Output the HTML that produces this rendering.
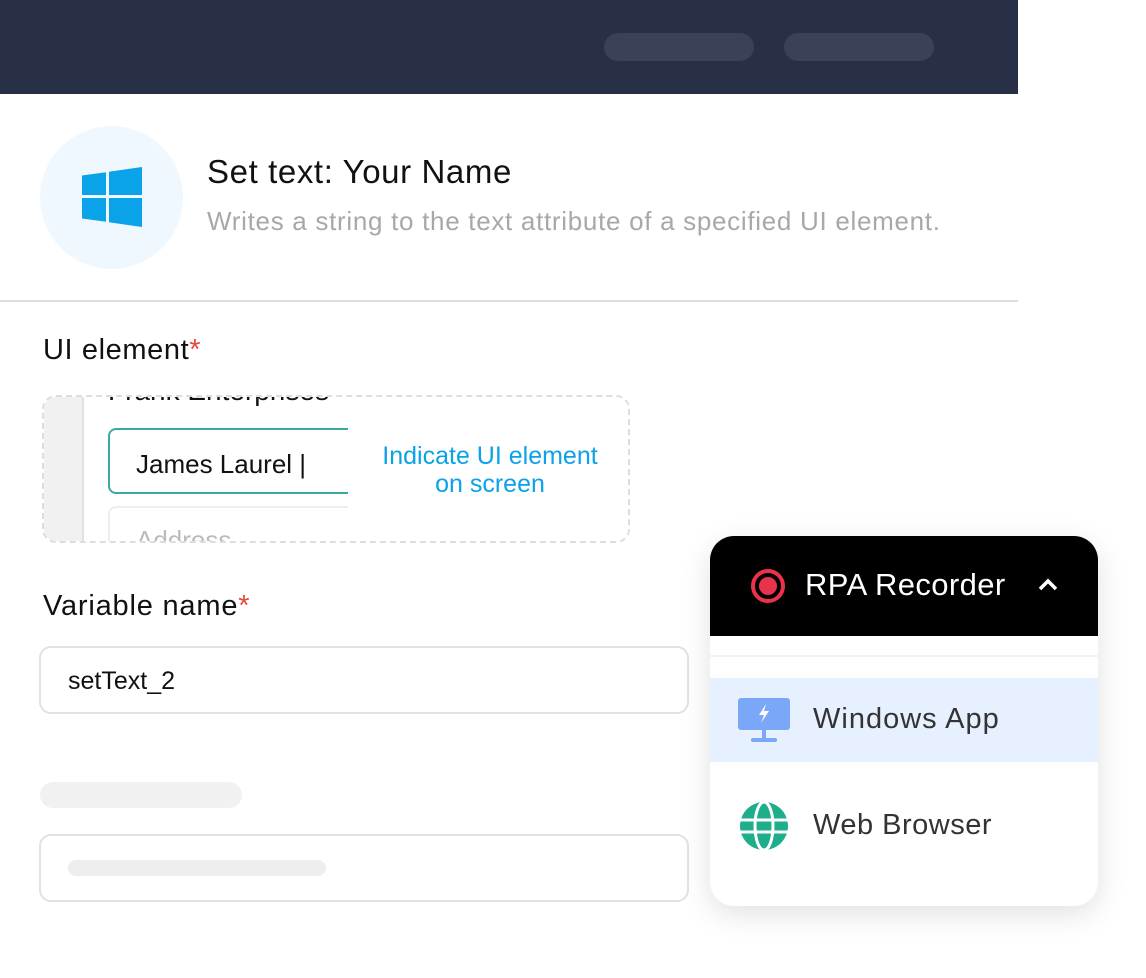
<!DOCTYPE html>
<html><head><style>
body{margin:0;width:1146px;height:978px;background:#fff;position:relative;overflow:hidden;font-family:"Liberation Sans",sans-serif}
.a{position:absolute}
</style></head><body>
<div class="a" style="left:0;top:0;width:1018px;height:94px;background:#283048"></div>
<div class="a" style="left:604px;top:33px;width:150px;height:28px;border-radius:14px;background:#3a4259"></div>
<div class="a" style="left:784px;top:33px;width:150px;height:28px;border-radius:14px;background:#3a4259"></div>
<div class="a" style="left:40px;top:126px;width:143px;height:143px;border-radius:50%;background:#eff8fe"></div>
<svg class="a" style="left:82px;top:167px" width="60" height="60" viewBox="0 0 60 60"><path fill="#0aa2e8" d="M0 8.5L24 5.2V28H0ZM27 4.8L60 0V28H27ZM0 31H24V54.8L0 51.5ZM27 31H60V60L27 55.2Z"/></svg>
<div class="a" style="left:207px;top:153px;font-size:33px;letter-spacing:0.6px;color:#111">Set text: Your Name</div>
<div class="a" style="left:207px;top:206px;font-size:26px;letter-spacing:0.7px;color:#a8a8a8">Writes a string to the text attribute of a specified UI element.</div>
<div class="a" style="left:0;top:300px;width:1018px;height:2px;background:#ddd"></div>
<div class="a" style="left:43px;top:334px;font-size:29px;letter-spacing:0.6px;color:#111">UI element<span style="color:#e8483b">*</span></div>
<div class="a" style="left:42px;top:395px;width:588px;height:148px;border:2px dashed #ddd;border-radius:14px;overflow:hidden;box-sizing:border-box">
 <div class="a" style="left:0;top:0;width:38px;height:148px;background:#f1f1f1;border-right:2px solid #e2e2e2"></div>
 <div class="a" style="left:64px;top:-22px;font-size:28px;color:#111;width:242px;overflow:hidden;white-space:nowrap">Frank Enterprises</div>
 <div class="a" style="left:64px;top:31px;width:260px;height:66px;border:2px solid #3aa9a6;border-radius:8px;box-sizing:border-box"></div>
 <div class="a" style="left:92px;top:52px;font-size:26px;color:#111">James Laurel |</div>
 <div class="a" style="left:64px;top:109px;width:260px;height:60px;border:2px solid #eee;border-radius:8px;box-sizing:border-box"></div>
 <div class="a" style="left:92px;top:128px;font-size:26px;color:#bbb">Address</div>
 <div class="a" style="left:304px;top:0;width:284px;height:148px;background:#fff"></div>
 <div class="a" style="left:306px;top:45px;width:280px;text-align:center;font-size:25px;line-height:28px;color:#0aa2e8">Indicate UI element<br>on screen</div>
</div>
<div class="a" style="left:43px;top:590px;font-size:29px;letter-spacing:0.8px;color:#111">Variable name<span style="color:#e8483b">*</span></div>
<div class="a" style="left:39px;top:646px;width:650px;height:68px;border:2px solid #e2e2e2;border-radius:12px;box-sizing:border-box"></div>
<div class="a" style="left:68px;top:667px;font-size:25px;color:#111">setText_2</div>
<div class="a" style="left:40px;top:782px;width:202px;height:26px;border-radius:13px;background:#f1f1f1"></div>
<div class="a" style="left:39px;top:834px;width:650px;height:68px;border:2px solid #e2e2e2;border-radius:12px;box-sizing:border-box"></div>
<div class="a" style="left:68px;top:860px;width:258px;height:16px;border-radius:8px;background:#eee"></div>
<div class="a" style="left:710px;top:536px;width:388px;height:370px;border-radius:24px;background:#fff;box-shadow:0 8px 30px rgba(0,0,0,.12);overflow:hidden">
 <div class="a" style="left:0;top:0;width:388px;height:100px;background:#000"></div>
 <div class="a" style="left:41px;top:33px;width:34px;height:34px;border:4px solid #e8334a;border-radius:50%;box-sizing:border-box"></div>
 <div class="a" style="left:49px;top:41px;width:18px;height:18px;background:#e8334a;border-radius:50%"></div>
 <div class="a" style="left:95px;top:31px;font-size:31px;letter-spacing:0.4px;color:#fff">RPA Recorder</div>
 <svg class="a" style="left:328px;top:42px" width="20" height="14"><path d="M2 11L10 3L18 11" stroke="#fff" stroke-width="3.5" fill="none"/></svg>
 <div class="a" style="left:0;top:119px;width:388px;height:2px;background:#f3f3f3"></div>
 <div class="a" style="left:0;top:142px;width:388px;height:84px;background:#e7f0fe"></div>
 <svg class="a" style="left:28px;top:162px" width="52" height="45" viewBox="0 0 52 45"><rect x="0" y="0" width="52" height="32" rx="3" fill="#7aa7f8"/><rect x="24" y="32" width="4" height="9" fill="#7aa7f8"/><rect x="13" y="40" width="26" height="4" rx="2" fill="#7aa7f8"/><path d="M28 6L21 17H26L23 25L31 13H26Z" fill="#fff"/></svg>
 <div class="a" style="left:103px;top:167px;font-size:29px;letter-spacing:1px;color:#333">Windows App</div>
 <svg class="a" style="left:30px;top:266px" width="48" height="48" viewBox="0 0 48 48"><circle cx="24" cy="24" r="24" fill="#1fae8c"/><ellipse cx="24" cy="24" rx="9" ry="24" fill="none" stroke="#fff" stroke-width="3"/><path d="M0 18H48M0 30H48" stroke="#fff" stroke-width="3"/></svg>
 <div class="a" style="left:103px;top:273px;font-size:29px;letter-spacing:0.5px;color:#333">Web Browser</div>
</div>
</body></html>
